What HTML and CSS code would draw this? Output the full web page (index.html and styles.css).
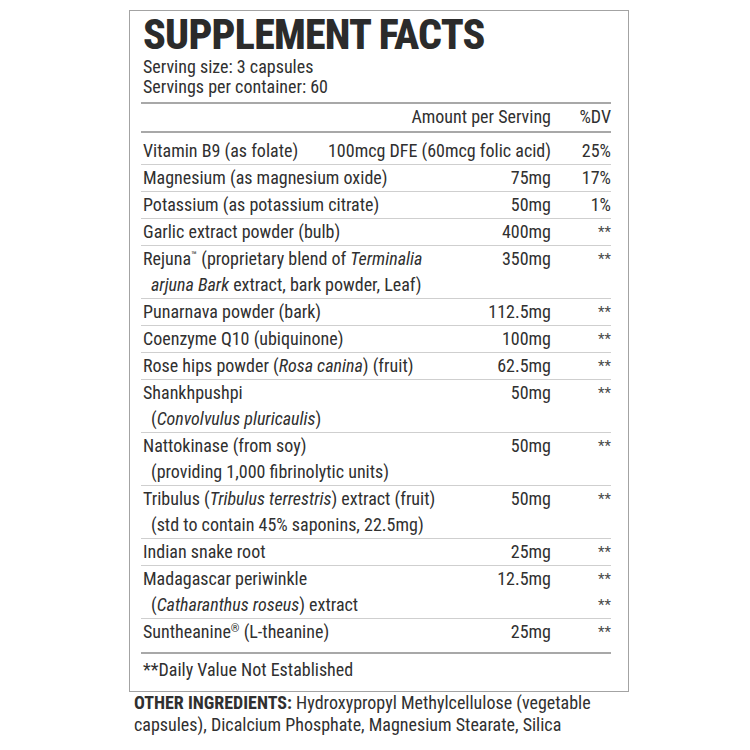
FILE: index.html
```html
<!DOCTYPE html>
<html lang="en">
<head>
<meta charset="utf-8">
<title>Supplement Facts</title>
<link rel="stylesheet" href="styles.css">
</head>
<body>
<div class="label">
  <h1 class="title">SUPPLEMENT FACTS</h1>
  <div class="serving">
    <div>Serving size: 3 capsules</div>
    <div>Servings per container: 60</div>
  </div>
  <div class="table">
    <div class="head">
      <span class="amt">Amount per Serving</span>
      <span class="dv">%DV</span>
    </div>
    <div class="row first">
      <span class="name">Vitamin B9 (as folate)</span>
      <span class="amt">100mcg DFE (60mcg folic acid)</span>
      <span class="dv">25%</span>
    </div>
    <div class="row">
      <span class="name">Magnesium (as magnesium oxide)</span>
      <span class="amt">75mg</span>
      <span class="dv">17%</span>
    </div>
    <div class="row">
      <span class="name">Potassium (as potassium citrate)</span>
      <span class="amt">50mg</span>
      <span class="dv">1%</span>
    </div>
    <div class="row">
      <span class="name">Garlic extract powder (bulb)</span>
      <span class="amt">400mg</span>
      <span class="dv star">**</span>
    </div>
    <div class="row">
      <span class="name">Rejuna<sup class="mark">™</sup> (proprietary blend of <i>Terminalia</i><br><i>arjuna Bark</i> extract, bark powder, Leaf)</span>
      <span class="amt">350mg</span>
      <span class="dv star">**</span>
    </div>
    <div class="row">
      <span class="name">Punarnava powder (bark)</span>
      <span class="amt">112.5mg</span>
      <span class="dv star">**</span>
    </div>
    <div class="row">
      <span class="name">Coenzyme Q10 (ubiquinone)</span>
      <span class="amt">100mg</span>
      <span class="dv star">**</span>
    </div>
    <div class="row">
      <span class="name">Rose hips powder (<i>Rosa canina</i>) (fruit)</span>
      <span class="amt">62.5mg</span>
      <span class="dv star">**</span>
    </div>
    <div class="row">
      <span class="name">Shankhpushpi<br>(<i>Convolvulus pluricaulis</i>)</span>
      <span class="amt">50mg</span>
      <span class="dv star">**</span>
    </div>
    <div class="row">
      <span class="name">Nattokinase (from soy)<br>(providing 1,000 fibrinolytic units)</span>
      <span class="amt">50mg</span>
      <span class="dv star">**</span>
    </div>
    <div class="row">
      <span class="name">Tribulus (<i>Tribulus terrestris</i>) extract (fruit)<br>(std to contain 45% saponins, 22.5mg)</span>
      <span class="amt">50mg</span>
      <span class="dv star">**</span>
    </div>
    <div class="row">
      <span class="name">Indian snake root</span>
      <span class="amt">25mg</span>
      <span class="dv star">**</span>
    </div>
    <div class="row">
      <span class="name">Madagascar periwinkle<br>(<i>Catharanthus roseus</i>) extract</span>
      <span class="amt">12.5mg</span>
      <span class="dv star">**<br>**</span>
    </div>
    <div class="row last">
      <span class="name">Suntheanine<sup class="mark">®</sup> (L-theanine)</span>
      <span class="amt">25mg</span>
      <span class="dv star">**</span>
    </div>
  </div>
  <div class="note">**Daily Value Not Established</div>
</div>
<p class="other"><b>OTHER INGREDIENTS:</b> Hydroxypropyl Methylcellulose (vegetable capsules), Dicalcium Phosphate, Magnesium Stearate, Silica</p>
</body>
</html>
```
FILE: styles.css
```css
html, body {
  margin: 0;
  padding: 0;
  background: #ffffff;
}

body {
  font-family: "Roboto Condensed", "Roboto", "Liberation Sans", sans-serif;
  font-size: 18px;
  color: #303030;
}

.label {
  box-sizing: border-box;
  width: 500px;
  height: 682px;
  margin: 10px 0 0 129px;
  padding: 2px 17px 0 11px;
  border: 1px solid #a3a3a3;
}

.title {
  margin: 0;
  font-size: 42px;
  line-height: 44px;
  font-weight: 800;
  letter-spacing: -0.8px;
  color: #2b2b2b;
  padding-left: 2px;
}

.serving {
  line-height: 20px;
  padding-left: 2px;
  padding-bottom: 5px;
  border-bottom: 2px solid #a8a8a8;
}

.head,
.row {
  display: flex;
  line-height: 26px;
}

.head {
  padding-bottom: 1px;
  border-bottom: 2px solid #a8a8a8;
}

.row {
  border-bottom: 1px solid #cfcfcf;
}

.row.first {
  padding-top: 5px;
}

.row.last {
  padding-bottom: 7px;
  border-bottom: 2px solid #a8a8a8;
}

.name {
  flex: 1;
  white-space: nowrap;
  padding-left: 10px;
  text-indent: -8px;
}

.head .amt {
  margin-left: auto;
}

.amt {
  white-space: nowrap;
  text-align: right;
}

.dv {
  width: 60px;
  flex: none;
  text-align: right;
  white-space: nowrap;
}

.star {
  font-size: 15px;
  color: #4a4a4a;
  line-height: 26px;
}

.mark {
  font-size: 11px;
  vertical-align: 6px;
  line-height: 0;
}

.note {
  padding: 3px 0 0 2px;
  line-height: 26px;
}

.other {
  margin: 0 0 0 134px;
  width: 480px;
  line-height: 22px;
}

.other b {
  font-weight: 700;
}
```
